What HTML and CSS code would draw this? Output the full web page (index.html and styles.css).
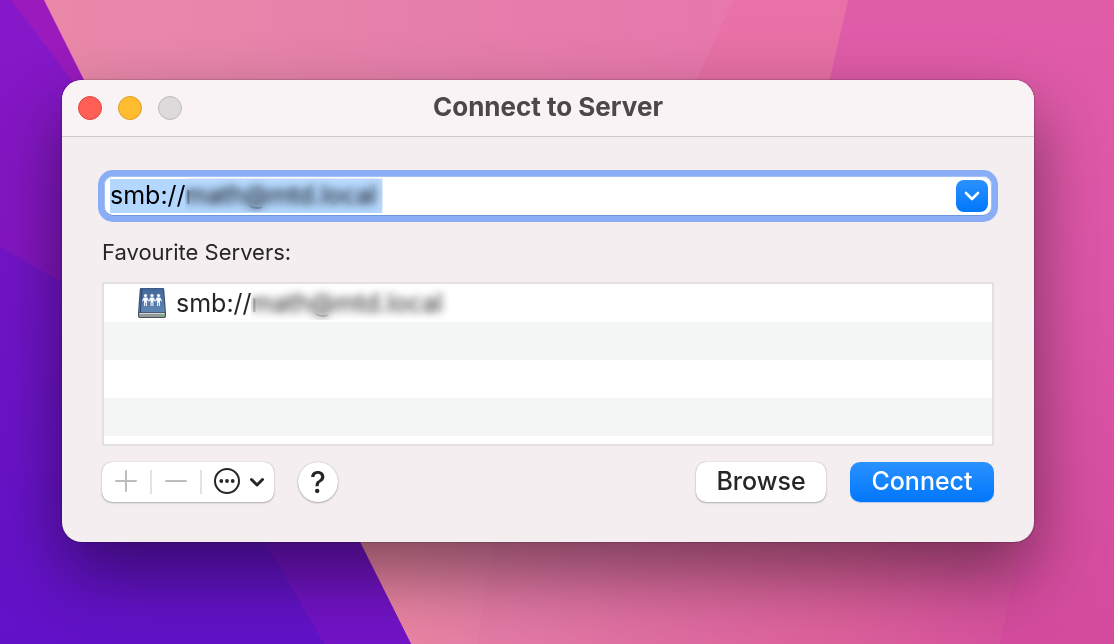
FILE: index.html
```html
<!DOCTYPE html>
<html lang="en-GB">
<head>
<meta charset="utf-8">
<meta name="viewport" content="width=device-width, initial-scale=1">
<title>Connect to Server</title>
<link rel="stylesheet" href="styles.css">
</head>
<body class="desktop">
<svg class="wallpaper" viewBox="0 0 1114 644" preserveAspectRatio="none" aria-hidden="true">
  <defs>
    <linearGradient id="pink" x1="0" y1="0" x2="1" y2="0">
      <stop offset="0" stop-color="#e988a8"/><stop offset=".15" stop-color="#e887aa"/><stop offset=".38" stop-color="#e67fab"/><stop offset=".65" stop-color="#e777ac"/>
    </linearGradient>
    <linearGradient id="rose" x1="0" y1="0" x2="0" y2="1">
      <stop offset="0" stop-color="#e872a7"/><stop offset="1" stop-color="#df6199"/>
    </linearGradient>
    <linearGradient id="magenta" x1="0" y1="0" x2="0" y2="1">
      <stop offset="0" stop-color="#e05da8"/><stop offset=".45" stop-color="#dd55a8"/><stop offset="1" stop-color="#d44b9d"/>
    </linearGradient>
    <linearGradient id="low" gradientUnits="userSpaceOnUse" x1="400" y1="0" x2="1034" y2="0">
      <stop offset="0" stop-color="#eb85a4"/><stop offset=".12" stop-color="#e67fa5"/><stop offset=".35" stop-color="#e070a2"/><stop offset=".7" stop-color="#dc609b"/><stop offset="1" stop-color="#d54f9e"/>
    </linearGradient>
    <linearGradient id="violet" x1="0" y1="0" x2="0" y2="1">
      <stop offset="0" stop-color="#8618ca"/><stop offset="1" stop-color="#8215bd"/>
    </linearGradient>
    <linearGradient id="indigo" x1="0" y1="0" x2="0" y2="1">
      <stop offset="0" stop-color="#7314c7"/><stop offset="1" stop-color="#6112c8"/>
    </linearGradient>
  </defs>
  <path fill="url(#pink)" d="M0 0H1114V644H0Z"/>
  <path fill="url(#rose)" d="M733 0H1114V644H440Z"/>
  <path fill="url(#magenta)" d="M848 0H1114V644H700Z"/>
  <path fill="url(#low)" d="M300 500H1030L1000 644H300Z"/>
  <path fill="#df75a9" opacity=".25" d="M500 500L477 644H560L620 500Z"/>
  <path fill="#9a1abd" d="M0 0H44L84 80Q250 330 360 542L411 644H0Z"/>
  <path fill="url(#violet)" d="M0 0H11L72 80L160 320H0Z"/>
  <path fill="url(#indigo)" d="M0 247L62 282L266 542L325 644H0Z"/>
  <path fill="#7213c6" d="M220 460L266 542L325 644H411L360 542L317 460Z"/>
</svg>
<main class="window">
  <header class="titlebar">
    <div class="lights">
      <button class="light light-close" type="button" aria-label="Close"></button>
      <button class="light light-minimise" type="button" aria-label="Minimise"></button>
      <button class="light light-zoom" type="button" aria-label="Zoom" disabled></button>
    </div>
    <h1 class="title">Connect to Server</h1>
  </header>
  <form class="content">
    <div class="combo">
      <input class="address" type="text" aria-label="Server address" value="smb://math@mtd.local" spellcheck="false" autocomplete="off">
      <span class="veil veil-address"></span>
      <button class="disclose" type="button" aria-label="Recent servers">
        <svg class="icon-small" viewBox="0 0 16 12" aria-hidden="true"><path d="M2 3L8 9L14 3" fill="none" stroke="currentColor" stroke-width="2.6" stroke-linecap="round" stroke-linejoin="round"/></svg>
      </button>
    </div>
    <h2 class="label" id="favourites">Favourite Servers:</h2>
    <ul class="servers" aria-labelledby="favourites">
      <li class="server">
        <svg class="server-icon" viewBox="0 0 30 32" aria-hidden="true">
          <defs><linearGradient id="drive" x1="0" y1="0" x2="0" y2="1"><stop offset="0" stop-color="#426999"/><stop offset="1" stop-color="#6086b4"/></linearGradient></defs>
          <path d="M4 1H26Q27 1 27.200 2L29 26V29Q29 31 27 31H3Q1 31 1 29V26L2.800 2Q3 1 4 1Z" fill="#354e70"/>
          <path d="M4 1.500H26L28 25.500H2Z" fill="url(#drive)"/>
          <path d="M5 1.500L3.300 25.500" stroke="#28476f" stroke-width="1"/>
          <path d="M1.500 26H28.500V28.500Q28.500 30.500 26.500 30.500H3.500Q1.500 30.500 1.500 28.500Z" fill="#96999c" stroke="#4c5158"/>
          <path d="M2.500 26.500H27.500" stroke="#d2d4d6"/>
          <circle cx="26" cy="28.500" r="1" fill="#49d757"/>
          <g fill="#fff">
            <g id="person"><circle cx="8.500" cy="8.500" r="1.600"/><path d="M6.800 10.500H10.200L12 14L11.300 14.500L9.900 12.800V19H8.900V15.500H8.100V19H7.100V12.800L5.700 14.500L5 14Z"/></g>
            <use href="#person" x="6.500"/><use href="#person" x="13"/>
          </g>
        </svg>
        <span class="server-name">smb://math@mtd.local</span>
        <span class="veil veil-server"></span>
      </li>
    </ul>
    <div class="actions">
      <div class="segments">
        <button class="segment" type="button" aria-label="Add" disabled>
          <svg class="icon" viewBox="0 0 24 24" aria-hidden="true"><path d="M2 11H22M12 1V21" stroke="currentColor" stroke-width="2" stroke-linecap="round"/></svg>
        </button>
        <button class="segment" type="button" aria-label="Remove" disabled>
          <svg class="icon" viewBox="0 0 24 24" aria-hidden="true"><path d="M2 11H22" stroke="currentColor" stroke-width="2" stroke-linecap="round"/></svg>
        </button>
        <button class="segment segment-menu" type="button" aria-label="More options">
          <svg class="icon-more" viewBox="0 0 28 28" aria-hidden="true"><circle cx="14" cy="13" r="12" fill="none" stroke="currentColor" stroke-width="2"/><g fill="currentColor"><circle cx="8.300" cy="13" r="1.900"/><circle cx="14" cy="13" r="1.900"/><circle cx="19.700" cy="13" r="1.900"/></g></svg>
          <svg class="icon-small" viewBox="0 0 16 12" aria-hidden="true"><path d="M2.500 3.500L8 9L13.500 3.500" fill="none" stroke="currentColor" stroke-width="3" stroke-linecap="round" stroke-linejoin="round"/></svg>
        </button>
      </div>
      <button class="help" type="button" aria-label="Help">?</button>
      <button class="push push-browse" type="button">Browse</button>
      <button class="push push-connect" type="submit">Connect</button>
    </div>
  </form>
</main>
</body>
</html>
```
FILE: styles.css
```css
* { box-sizing: border-box; }

.desktop {
  margin: 0;
  min-height: 100vh;
  padding: 80px 80px 102px 62px;
  font-family: Inter, "Liberation Sans", sans-serif;
  color: #272527;
  background: #e67fab;
}

.wallpaper {
  position: fixed;
  inset: 0;
  width: 100%;
  height: 100%;
}

.window {
  position: relative;
  border-radius: 20px;
  background: #f4eef0;
  box-shadow: 0 0 2px rgba(0, 0, 0, .5), 0 32px 70px rgba(0, 0, 0, .46);
}

.titlebar {
  display: grid;
  grid-template-columns: 1fr auto 1fr;
  align-items: center;
  height: 57px;
  padding: 0 16px;
  border-bottom: 1px solid #cdc8ca;
  border-radius: 20px 20px 0 0;
  background: #f9f3f5;
}

.lights { display: flex; gap: 16px; }

.light {
  width: 24px;
  height: 24px;
  padding: 0;
  border: 1px solid;
  border-radius: 50%;
}

.light-close { background: #ff5f57; border-color: #e2463f; }
.light-minimise { background: #febc2e; border-color: #e0a028; }
.light-zoom { background: #dddadb; border-color: #bfbbbd; }

.title {
  margin: 0;
  padding-bottom: 2px;
  font-size: 26px;
  line-height: 32px;
  font-weight: 700;
  color: #4b474a;
}

.content { padding: 39px 40px 40px; }

button, input { font-family: inherit; }

.combo {
  position: relative;
  display: flex;
  align-items: center;
  height: 40px;
  margin: 0 2px;
  padding: 0 4px 0 6px;
  border-radius: 9px;
  background: #fff;
  box-shadow: inset 0 -1px 0 #6f97dc, inset 0 0 0 1px #a4bff4, 0 0 0 6px #89adf7;
}

.address {
  flex: 1;
  min-width: 0;
  height: 34px;
  padding: 0 0 2px;
  border: 0;
  outline: 0;
  font-size: 25px;
  line-height: 32px;
  color: #000;
  background: linear-gradient(#b3d7ff, #b3d7ff) no-repeat 0 0 / 272px 100%;
}

/* Frosted strips that hide the private part of an address */
.veil {
  position: absolute;
  width: 198px;
  height: 34px;
  backdrop-filter: blur(4px);
}

.veil-address { left: 81px; top: 2px; }
.veil-server { left: 147px; top: 2px; }

.disclose {
  display: grid;
  place-items: center;
  width: 32px;
  height: 32px;
  padding: 0;
  border: 0;
  border-radius: 8px;
  color: #fff;
  background: linear-gradient(#2b91ff, #0077fc);
}

.icon-small { width: 16px; height: 12px; }

.label {
  margin: 22px 0 16px;
  font-size: 22px;
  line-height: 28px;
  font-weight: 400;
}

.servers {
  height: 164px;
  margin: 0;
  padding: 0;
  border: 2px solid #e2e0e1;
  list-style: none;
  background: repeating-linear-gradient(#fff 0 38px, #f4f5f5 38px 76px);
}

.server {
  position: relative;
  display: flex;
  align-items: center;
  gap: 9px;
  height: 38px;
  padding-left: 33px;
  font-size: 25px;
}

.server-icon { width: 30px; height: 32px; }

.actions {
  display: flex;
  align-items: center;
  margin-top: 16px;
}

.segments, .help, .push-browse {
  background: #fff;
  box-shadow: 0 0 1px rgba(0, 0, 0, .35), 0 1px 2px rgba(0, 0, 0, .25);
}

.segments {
  display: flex;
  align-items: center;
  height: 40px;
  border-radius: 10px;
}

.segment {
  display: flex;
  align-items: center;
  justify-content: center;
  width: 50px;
  height: 24px;
  padding: 0;
  border: 0;
  border-right: 2px solid #e4e3e4;
  color: #272527;
  background: none;
}

.segment:disabled { color: #bdbbbc; }

.segment-menu {
  width: 72px;
  padding-left: 2px;
  gap: 8px;
  border-right: 0;
}

.icon { width: 24px; height: 24px; }
.icon-more { width: 28px; height: 28px; }

.help {
  width: 40px;
  height: 40px;
  margin: 0 auto 0 24px;
  padding: 0;
  border: 0;
  border-radius: 50%;
  font-size: 30px;
  line-height: 40px;
  font-weight: 500;
  color: #272527;
}

.push {
  height: 40px;
  padding: 0 0 2px;
  border: 0;
  border-radius: 10px;
  font-size: 25px;
  font-weight: 500;
  line-height: 38px;
}

.push-browse { width: 130px; color: #272527; }

.push-connect {
  width: 144px;
  margin-left: 24px;
  color: #fff;
  background: linear-gradient(#2b91ff, #0077fc);
  box-shadow: 0 1px 1px rgba(0, 90, 220, .25);
}
```
